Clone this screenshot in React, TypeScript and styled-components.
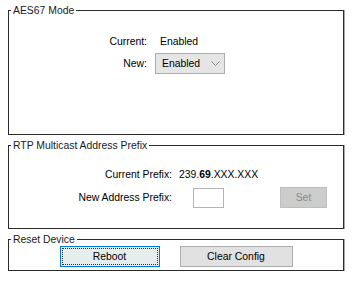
import React from 'react';
import styled, { createGlobalStyle } from 'styled-components';

const GlobalStyle = createGlobalStyle`
  body {
    margin: 0;
    background: #fff;
    color: #000;
    font-family: "Liberation Sans", Arial, sans-serif;
    font-size: 10.4px;
  }
`;

const App = () => {
  return (
    <Page>
      <GlobalStyle />
      <Group>
        <Legend>AES67 Mode</Legend>
        <ModeGrid>
          <Label>Current:</Label>
          <Value $indent={5}>Enabled</Value>
          <Label>New:</Label>
          <Value>
            <SelectBox>
              <span>Enabled</span>
              <svg width='9' height='5' viewBox='0 0 9 5'>
                <path d='M0.5 0.5 L4.5 4.5 L8.5 0.5' fill='none' stroke='#7a7a7a' strokeWidth='0.9' />
              </svg>
            </SelectBox>
          </Value>
        </ModeGrid>
      </Group>
      <Group>
        <Legend>RTP Multicast Address Prefix</Legend>
        <PrefixGrid>
          <Label>Current Prefix:</Label>
          <Value>
            239.<b>69</b>.XXX.XXX
          </Value>
          <span />
          <Label>New Address Prefix:</Label>
          <Value $indent={14}>
            <TextInput />
          </Value>
          <SetButton disabled>Set</SetButton>
        </PrefixGrid>
      </Group>
      <Group>
        <Legend>Reset Device</Legend>
        <ButtonRow>
          <PushButton $width={100} $focused>
            <FocusRing>Reboot</FocusRing>
          </PushButton>
          <PushButton $width={113}>Clear Config</PushButton>
        </ButtonRow>
      </Group>
    </Page>
  );
};

const Page = styled.div`
  width: 336px;
  padding: 4px 0 0 8px;
  display: flex;
  flex-direction: column;
  gap: 4px;
`;

const Group = styled.fieldset`
  margin: 0;
  padding: 0;
  min-width: 0;
  border: 1px solid #2b2b2b;
  box-shadow: 1px 0 0 #a9a9a9;
`;

const Legend = styled.legend`
  margin-left: 2px;
  padding: 0 2px;
  line-height: 13px;
  color: #1a1a1a;
`;

const ModeGrid = styled.div`
  display: grid;
  grid-template-columns: 138px 1fr;
  column-gap: 8px;
  grid-auto-rows: 22px;
  align-items: center;
  padding: 13px 0 60px;
`;

const PrefixGrid = styled.div`
  display: grid;
  grid-template-columns: 163px 1fr 47px;
  column-gap: 7px;
  grid-auto-rows: 23px;
  align-items: center;
  padding: 11px 16px 19px 0;
`;

const Label = styled.div`
  text-align: right;
  white-space: nowrap;
`;

const Value = styled.div<{ $indent?: number }>`
  display: flex;
  align-items: center;
  padding-left: ${(p) => p.$indent || 0}px;
  white-space: nowrap;
`;

const SelectBox = styled.div`
  box-sizing: border-box;
  width: 70px;
  height: 21px;
  display: flex;
  align-items: center;
  justify-content: space-between;
  padding: 0 4px 0 6px;
  background: #e5e5e5;
  border: 1px solid #acacac;
`;

const TextInput = styled.input`
  box-sizing: border-box;
  width: 31px;
  height: 20px;
  margin: 0;
  border: 1px solid #b4b4b4;
  background: #fff;
`;

const SetButton = styled.button`
  box-sizing: border-box;
  width: 47px;
  height: 21px;
  margin: 0;
  font: inherit;
  color: #8b8b8b;
  background: #cccccc;
  border: 1px solid #bfbfbf;
`;

const ButtonRow = styled.div`
  display: flex;
  justify-content: center;
  gap: 20px;
  padding: 0 0 3px;
`;

const PushButton = styled.button<{ $width: number; $focused?: boolean }>`
  box-sizing: border-box;
  width: ${(p) => p.$width}px;
  height: 21px;
  margin: 0;
  padding: 1px;
  font: inherit;
  color: #000;
  background: ${(p) => (p.$focused ? '#e5eeec' : '#e1e1e1')};
  border: 1px solid ${(p) => (p.$focused ? '#0078d7' : '#adadad')};
  display: flex;
  align-items: center;
  justify-content: center;
`;

const FocusRing = styled.span`
  align-self: stretch;
  flex: 1;
  display: flex;
  align-items: center;
  justify-content: center;
  border: 1px dotted #333;
`;

export default App;
